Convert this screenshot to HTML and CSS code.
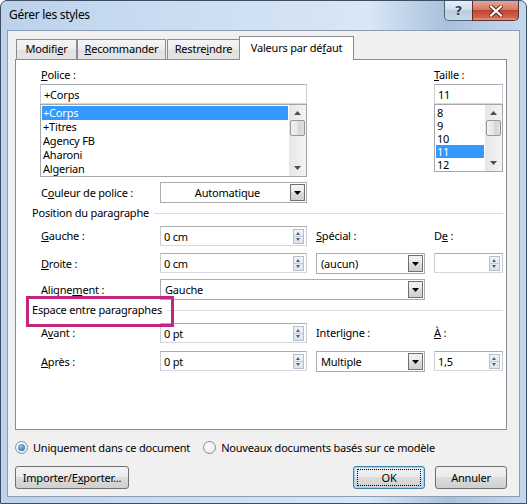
FILE: index.html
```html
<!DOCTYPE html>
<html lang="fr">
<head>
  <meta charset="UTF-8" />
  <title>Gérer les styles</title>
  <link rel="stylesheet" href="styles.css">
</head>
<body>
  <div class="window">
    <div class="titlebar">
      <span class="title">Gérer les styles</span>
      <div class="caption-btns">
        <div class="cap help">?</div>
        <div class="cap close">
          <svg width="14" height="12" viewBox="0 0 14 12">
            <path d="M2 1.5 L12 10.5 M12 1.5 L2 10.5" stroke="#5a2a22" stroke-width="4" stroke-linecap="square"/>
            <path d="M2 1.5 L12 10.5 M12 1.5 L2 10.5" stroke="#fff" stroke-width="2.2" stroke-linecap="square"/>
          </svg>
        </div>
      </div>
    </div>

    <div class="client">
      <div class="tabs">
        <div class="tab">Modifi<u>e</u>r</div>
        <div class="tab"><u>R</u>ecommander</div>
        <div class="tab">Restre<u>i</u>ndre</div>
        <div class="tab active">Valeurs par dé<u>f</u>aut</div>
      </div>

      <div class="panel">
        <div class="font-area">
          <div class="police">
            <div class="label"><u>P</u>olice :</div>
            <div class="field">+Corps</div>
            <div class="listbox tall">
              <div class="items">
                <div class="item selected">+Corps</div>
                <div class="item">+Titres</div>
                <div class="item">Agency FB</div>
                <div class="item">Aharoni</div>
                <div class="item">Algerian</div>
              </div>
              <div class="vscroll">
                <svg class="arrow" width="7" height="4" viewBox="0 0 7 4"><path d="M0 4 L3.5 0 L7 4Z" fill="#505050"/></svg>
                <div class="thumb"></div>
                <svg class="arrow down" width="7" height="4" viewBox="0 0 7 4"><path d="M0 0 L3.5 4 L7 0Z" fill="#505050"/></svg>
              </div>
            </div>
          </div>
          <div class="taille">
            <div class="label"><u>T</u>aille :</div>
            <div class="field">11</div>
            <div class="listbox short">
              <div class="items small">
                <div class="item">8</div>
                <div class="item">9</div>
                <div class="item">10</div>
                <div class="item selected">11</div>
                <div class="item">12</div>
              </div>
              <div class="vscroll">
                <svg class="arrow" width="7" height="4" viewBox="0 0 7 4"><path d="M0 4 L3.5 0 L7 4Z" fill="#505050"/></svg>
                <div class="thumb"></div>
                <svg class="arrow down" width="7" height="4" viewBox="0 0 7 4"><path d="M0 0 L3.5 4 L7 0Z" fill="#505050"/></svg>
              </div>
            </div>
          </div>
        </div>

        <div class="row row-color">
          <div class="label">C<u>o</u>uleur de police :</div>
          <div class="combo centered">
            <span class="combo-text">Automatique</span>
            <div class="drop"><svg width="7" height="4" viewBox="0 0 7 4"><path d="M0 0 L3.5 4 L7 0Z" fill="#000"/></svg></div>
          </div>
        </div>

        <div class="group-title first"><span>Position du paragraphe</span></div>

        <div class="row row-gauche">
          <div class="label"><u>G</u>auche :</div>
          <div class="field">0 cm
            <div class="spin"><div class="spin-up"></div><div class="spin-down"></div></div>
          </div>
          <div class="label"><u>S</u>pécial :</div>
          <div class="label">D<u>e</u> :</div>
        </div>

        <div class="row row-droite">
          <div class="label"><u>D</u>roite :</div>
          <div class="field">0 cm
            <div class="spin"><div class="spin-up"></div><div class="spin-down"></div></div>
          </div>
          <div class="combo">
            <span class="combo-text">(aucun)</span>
            <div class="drop"><svg width="7" height="4" viewBox="0 0 7 4"><path d="M0 0 L3.5 4 L7 0Z" fill="#000"/></svg></div>
          </div>
          <div class="field">
            <div class="spin"><div class="spin-up"></div><div class="spin-down"></div></div>
          </div>
        </div>

        <div class="row row-align">
          <div class="label">Aligne<u>m</u>ent :</div>
          <div class="combo wide">
            <span class="combo-text">Gauche</span>
            <div class="drop"><svg width="7" height="4" viewBox="0 0 7 4"><path d="M0 0 L3.5 4 L7 0Z" fill="#000"/></svg></div>
          </div>
        </div>

        <div class="group-title second"><span class="highlight">Espace entre paragraphes</span></div>

        <div class="row row-avant">
          <div class="label">A<u>v</u>ant :</div>
          <div class="field">0 pt
            <div class="spin"><div class="spin-up"></div><div class="spin-down"></div></div>
          </div>
          <div class="label">Interl<u>i</u>gne :</div>
          <div class="label"><u>À</u> :</div>
        </div>

        <div class="row row-apres">
          <div class="label"><u>A</u>près :</div>
          <div class="field">0 pt
            <div class="spin"><div class="spin-up"></div><div class="spin-down"></div></div>
          </div>
          <div class="combo">
            <span class="combo-text">Multiple</span>
            <div class="drop"><svg width="7" height="4" viewBox="0 0 7 4"><path d="M0 0 L3.5 4 L7 0Z" fill="#000"/></svg></div>
          </div>
          <div class="field">1,5
            <div class="spin"><div class="spin-up"></div><div class="spin-down"></div></div>
          </div>
        </div>
      </div>

      <div class="radios">
        <label class="option"><span class="radio checked"></span>Uniquement dans ce document</label>
        <label class="option"><span class="radio"></span>Nouveaux documents basés sur ce modèle</label>
      </div>

      <div class="buttons">
        <button class="btn import">Importer/E<u>x</u>porter...</button>
        <button class="btn ok"><span class="focus">OK</span></button>
        <button class="btn cancel">Annuler</button>
      </div>
    </div>
  </div>
</body>
</html>
```

FILE: styles.css
```css
* {
  box-sizing: border-box;
}

body {
  margin: 0;
  font-family: "Noto Sans", "Open Sans", sans-serif;
  font-size: 11px;
  letter-spacing: -0.2px;
  color: #000;
  background: #fff;
}

u {
  text-decoration: underline;
  text-underline-offset: 1px;
}

.window {
  width: 527px;
  height: 504px;
  border: 1px solid #3c4e64;
  border-radius: 7px 7px 0 0;
  background: linear-gradient(90deg, #bcd2eb 0%, #cddff2 40%, #d9e7f6 70%, #a9c0dc 85%, #c6d8ed 100%);
  display: flex;
  flex-direction: column;
  overflow: hidden;
}

.titlebar {
  height: 29px;
  display: flex;
  align-items: flex-start;
  padding-left: 8px;
}

.title {
  line-height: 28px;
  font-size: 12px;
  letter-spacing: -0.3px;
  color: #000;
}

.caption-btns {
  margin-left: auto;
  margin-right: 7px;
  display: flex;
}

.cap {
  height: 20px;
  border: 1px solid #4e627c;
  border-top: none;
  display: flex;
  align-items: center;
  justify-content: center;
}

.help {
  width: 29px;
  border-radius: 0 0 0 5px;
  background: linear-gradient(#e8eef6, #d2deeb 45%, #b9cbe0 50%, #c9d8ea);
  color: #2d3e55;
  font-family: "DejaVu Sans", sans-serif;
  font-weight: bold;
  font-size: 13px;
  text-shadow: 0 0 2px #fff;
}

.close {
  width: 47px;
  margin-left: -1px;
  border-color: #5b2f2a;
  border-radius: 0 0 5px 0;
  background: linear-gradient(#e8a596, #d67a66 45%, #c2432d 50%, #d0644c 85%, #e39a86);
}

.client {
  flex: 1;
  margin: 0 6px 6px;
  background: #f0f0f0;
  border: 1px solid #8a9db5;
  padding: 5px 12px 0 7px;
  display: flex;
  flex-direction: column;
}

/* tabs */
.tabs {
  height: 23px;
  display: flex;
  align-items: flex-end;
  padding-left: 1px;
}

.tab {
  height: 20px;
  border: 1px solid #898c95;
  border-bottom: none;
  background: linear-gradient(#f5f5f5, #ececec 50%, #e0e0e0 51%, #e6e6e6);
  text-align: center;
  line-height: 18px;
  color: #000;
}

.tab:nth-child(1) { width: 61px; }
.tab:nth-child(2) { width: 89px; }
.tab:nth-child(3) { width: 73px; margin-left: 1px; }

.tab.active {
  width: 115px;
  height: 24px;
  margin-bottom: -1px;
  margin-left: -1px;
  background: #fff;
  line-height: 22px;
  position: relative;
  z-index: 1;
}

.panel {
  height: 371px;
  border: 1px solid #898c95;
  background: #fff;
  padding: 8px 0 0 25px;
}

/* font / size pickers */
.font-area,
.row {
  display: grid;
  grid-template-columns: 110px 147px 109px 69px;
  column-gap: 9px;
}

.police {
  grid-column: 1 / 3;
  margin-left: -1px;
}

.police > .label {
  padding-left: 1px;
}

.taille {
  grid-column: 4;
}

.label {
  line-height: 14px;
  white-space: nowrap;
}

.font-area .label {
  height: 14px;
  margin-bottom: 2px;
}

.field {
  height: 20px;
  border: 1px solid #abadb3;
  border-color: #abadb3 #c9ccd2 #d5d8de #c9ccd2;
  background: #fff;
  display: flex;
  align-items: center;
  padding-left: 3px;
}

.listbox {
  display: flex;
  border: 1px solid #a6a6a6;
  background: #fff;
}

.listbox.tall {
  height: 73px;
}

.listbox.short {
  height: 68px;
}

.items {
  flex: 1;
  padding: 1px 1px 0;
  overflow: hidden;
}

.item {
  height: 14px;
  line-height: 14px;
  padding-left: 1px;
}

.items.small .item {
  height: 13px;
  line-height: 13px;
}

.item.selected {
  background: #3399ff;
  color: #fff;
}

.vscroll {
  width: 17px;
  background: linear-gradient(90deg, #e6e6e6, #f4f4f4);
  display: flex;
  flex-direction: column;
  align-items: center;
  padding-top: 6px;
}

.vscroll .arrow.down {
  margin-top: auto;
  margin-bottom: 6px;
}

.thumb {
  width: 15px;
  height: 16px;
  margin-top: 5px;
  border: 1px solid #979797;
  border-radius: 2px;
  background: linear-gradient(90deg, #f2f2f2, #e6e6e6 50%, #d6d6d6 51%, #dedede);
}

/* rows */
.row {
  align-items: center;
}

.row-color { margin-top: 5px; height: 21px; }
.row-gauche { margin-top: 6px; height: 20px; }
.row-droite { margin-top: 7px; height: 21px; }
.row-align { margin-top: 5px; height: 21px; }
.row-avant { margin-top: 6px; height: 20px; }
.row-apres { margin-top: 8px; height: 21px; }

.row .field {
  align-self: start;
}

.spin {
  margin-left: auto;
  margin-right: 2px;
  width: 11px;
  height: 15px;
  display: flex;
  flex-direction: column;
  border: 1px solid #b6bfcc;
  background: linear-gradient(#f1f4f8, #dde4ee);
}

.spin-up,
.spin-down {
  flex: 1;
  position: relative;
}

.spin-up {
  border-bottom: 1px solid #c3cad6;
}

.spin-up::after,
.spin-down::after {
  content: "";
  position: absolute;
  left: 2px;
  top: 2px;
  border-left: 2.5px solid transparent;
  border-right: 2.5px solid transparent;
}

.spin-up::after {
  border-bottom: 3px solid #4d5e7a;
}

.spin-down::after {
  top: 1px;
  border-top: 3px solid #4d5e7a;
}

.combo {
  height: 21px;
  border: 1px solid #acacac;
  background: #fff;
  display: flex;
  align-items: center;
  padding: 0 1px 0 4px;
}

.combo.centered .combo-text {
  flex: 1;
  text-align: center;
}

.combo.wide {
  grid-column: 2 / 4;
}

.drop {
  margin-left: auto;
  width: 15px;
  height: 17px;
  border: 1px solid #707070;
  background: linear-gradient(#f2f2f2, #ebebeb 45%, #dcdcdc 50%, #cfcfcf);
  display: flex;
  align-items: center;
  justify-content: center;
}

.group-title {
  display: flex;
  align-items: center;
  height: 14px;
  line-height: 14px;
  margin-left: -9px;
  margin-right: 3px;
}

.group-title::after {
  content: "";
  flex: 1;
  height: 1px;
  background: #dcdcdc;
  margin-left: 5px;
}

.group-title.first { margin-top: 3px; }
.group-title.second { margin-top: 3px; }

.highlight {
  position: relative;
}

.highlight::before {
  content: "";
  position: absolute;
  left: -6px;
  top: -7px;
  width: 142px;
  height: 25px;
  border: 3px solid #c4257e;
}

/* radios and buttons */
.radios {
  margin-top: 10px;
  height: 14px;
  display: flex;
  align-items: center;
  gap: 13px;
}

.option {
  display: flex;
  align-items: center;
  gap: 5px;
}

.radio {
  width: 13px;
  height: 13px;
  border-radius: 50%;
  border: 1px solid #8e8f8f;
  background: radial-gradient(circle at 40% 35%, #ffffff, #e2e2e2);
  display: flex;
  align-items: center;
  justify-content: center;
}

.radio.checked::after {
  content: "";
  width: 7px;
  height: 7px;
  border-radius: 50%;
  background: radial-gradient(circle at 40% 35%, #8cc4f4, #1a5e9e);
}

.buttons {
  margin-top: 12px;
  display: flex;
}

.btn {
  height: 23px;
  border: 1px solid #707070;
  border-radius: 3px;
  background: linear-gradient(#f2f2f2, #ebebeb 45%, #dddddd 50%, #cfcfcf);
  font-family: inherit;
  font-size: 11px;
  letter-spacing: inherit;
  color: #000;
  padding: 0;
}

.import {
  width: 114px;
}

.ok {
  margin-left: auto;
  width: 72px;
  border-color: #3c7fb1;
  box-shadow: inset 0 0 0 1px #a4d1f1;
  display: flex;
  align-items: center;
  justify-content: center;
}

.ok .focus {
  width: 64px;
  height: 17px;
  line-height: 15px;
  border: 1px dotted #000;
}

.cancel {
  width: 72px;
  margin-left: 10px;
}
```
